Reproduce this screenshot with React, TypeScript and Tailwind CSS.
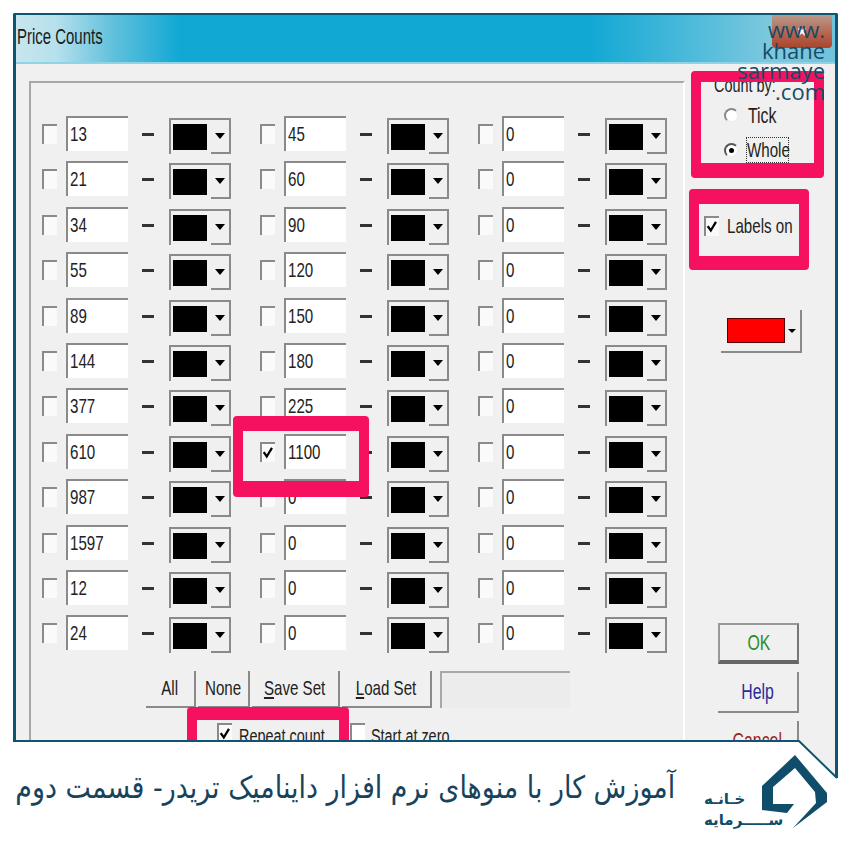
const F = "font-['Liberation_Sans',sans-serif] whitespace-nowrap";

const c1 = ["13","21","34","55","89","144","377","610","987","1597","12","24"];
const c2 = ["45","60","90","120","150","180","225","1100","0","0","0","0"];
const c3 = Array(12).fill("0");

function L({ children }: { children: React.ReactNode }) {
  return <span className="inline-block origin-left scale-x-[0.72]">{children}</span>;
}
function C({ children }: { children: React.ReactNode }) {
  return <span className="inline-block origin-center scale-x-[0.72]">{children}</span>;
}

function Check({ on, className = "" }: { on?: boolean; className?: string }) {
  return (
    <div className={`relative w-[15px] h-[20px] border-t-2 border-l-2 border-[#8a8a8a] bg-[#fafafa] shrink-0 ${className}`}>
      {on && (
        <svg viewBox="0 0 15 20" className="absolute left-0 top-0 w-[13px] h-[18px]">
          <path d="M2 9 L5.5 14 L11.5 4" fill="none" stroke="#000" strokeWidth="2.6" />
        </svg>
      )}
    </div>
  );
}

function Combo() {
  return (
    <div className="relative w-[62px] h-[36px] mt-[2px] ml-[15px] border-t-2 border-l-2 border-[#8a8a8a] bg-[#f0f0f0] shrink-0 flex pl-[2px] pt-[4px]">
      <div className="w-[34px] h-[26px] bg-black" />
      <div className="absolute right-0 top-0 bottom-0 w-[20px] border-r-2 border-b-2 border-[#8a8a8a] flex items-center justify-center">
        <div className="w-0 h-0 border-l-[5px] border-r-[5px] border-t-[6px] border-l-transparent border-r-transparent border-t-black" />
      </div>
    </div>
  );
}

function Cell({ v, on }: { v: string; on?: boolean }) {
  return (
    <div className="flex items-start h-[45.4px]">
      <Check on={on} className="mt-[8px]" />
      <div className={`ml-[9px] w-[62px] h-[35px] border-t-2 border-l-2 border-[#8a8a8a] bg-white pl-[2px] text-[21px] leading-[31px] text-[#222] ${F}`}><L>{v}</L></div>
      <div className="ml-[14px] mt-[17px] w-[12px] h-[3px] bg-[#333] shrink-0" />
      <Combo />
    </div>
  );
}

function Column({ values, on }: { values: string[]; on?: number }) {
  return (
    <div className="w-[218px] flex flex-col shrink-0">
      {values.map((v, i) => (
        <Cell key={i} v={v} on={on === i} />
      ))}
    </div>
  );
}

function Btn({ w, children }: { w: string; children: React.ReactNode }) {
  return (
    <div className={`${w} h-[37px] mr-[2px] border-r-2 border-b-2 border-[#8a8a8a] flex items-center justify-center text-[21px] text-[#222] ${F}`}><C>{children}</C></div>
  );
}

function SideBtn({ label, color, strong }: { label: string; color: string; strong?: boolean }) {
  return (
    <div className={`w-[81px] h-[41px] mb-[8px] flex items-center justify-center text-[22px] ${F} ${color} ${strong ? "border-2 border-t-[#999] border-l-[#999] border-r-[#777] border-b-[#666] border-b-4" : "border-r-2 border-b-2 border-[#8a8a8a]"}`}><C>{label}</C></div>
  );
}

function Highlight({ className }: { className: string }) {
  return <div className={`absolute border-[#f5115f] rounded-[4px] ${className}`} />;
}

export default function App() {
  return (
    <div className="relative w-[850px] h-[850px] bg-white overflow-hidden">
      <div className="pt-[13px] pl-[13px]">
        <div className="w-[825px] h-[766px] border-t-2 border-x-[3px] border-[#0f5470] bg-[#f0f0f0] rounded-t-[2px] overflow-hidden flex flex-col">
          <div className="relative h-[49px] shrink-0 border-b-2 border-[#8fd3e6] bg-[linear-gradient(90deg,#c8e6ee_0%,#b5e0ec_5%,#5fc0dc_12%,#11a8d4_20%,#11a8d4_70%,#7cc8de_92%,#6fc3da_100%)]">
            <div className={`pl-[1px] pt-[8px] text-[22px] leading-[28px] text-[#1a1a1a] ${F}`}><span className="inline-block origin-left scale-x-[0.68]">Price Counts</span></div>
            <div className="absolute right-[3px] top-0 w-[60px] h-[33px] rounded-b-[4px] bg-[linear-gradient(180deg,#b89a8c_0%,#b5614b_60%,#a8452e_100%)] flex items-center justify-center text-white text-[18px] font-bold">×</div>
          </div>
          <div className="flex flex-1 pt-[17px] pl-[13px]">
            <div className="w-[656px] shrink-0 border-t-2 border-l-2 border-[#a8a8a8] border-r-2 border-r-white pt-[33px] pl-[11px]">
              <div className="flex">
                <Column values={c1} />
                <Column values={c2} on={7} />
                <Column values={c3} />
              </div>
              <div className="flex pl-[104px] pt-[10px]">
                <Btn w="w-[50px]">All</Btn>
                <Btn w="w-[52px]">None</Btn>
                <Btn w="w-[88px]"><span><u>S</u>ave Set</span></Btn>
                <Btn w="w-[90px]"><span><u>L</u>oad Set</span></Btn>
                <div className="ml-[6px] w-[130px] h-[37px] border-t-2 border-l-2 border-[#a8a8a8] bg-[#ececec]" />
              </div>
              <div className="flex pl-[175px] pt-[15px] items-start">
                <Check on />
                <span className={`ml-[7px] w-[85px] pt-[2px] text-[20px] leading-[22px] text-[#222] ${F}`}><L>Repeat count</L></span>
                <Check className="ml-[26px] bg-white" />
                <span className={`ml-[6px] pt-[2px] text-[20px] leading-[22px] text-[#222] ${F}`}><L>Start at zero</L></span>
              </div>
            </div>
            <div className="flex-1 flex flex-col pl-[17px]">
              <div className={`pl-[12px] -mt-[6px] text-[20px] leading-[20px] text-[#222] ${F}`}><L>Count by:</L></div>
              <div className="flex items-center pl-[22px] mt-[3px] h-[34px]">
                <div className="w-[15px] h-[15px] rounded-full border-2 border-[#888] border-r-[#eee] border-b-[#eee] bg-white shrink-0" />
                <span className={`ml-[9px] text-[22px] text-[#222] ${F}`}><L>Tick</L></span>
              </div>
              <div className="flex items-center pl-[22px] h-[36px]">
                <div className="w-[15px] h-[15px] rounded-full border-2 border-[#555] border-r-[#eee] border-b-[#eee] bg-white flex items-center justify-center shrink-0">
                  <div className="w-[5px] h-[5px] rounded-full bg-black" />
                </div>
                <span className={`ml-[7px] w-[43px] border border-dotted border-[#333] text-[21px] leading-[24px] text-[#222] ${F}`}><L>Whole</L></span>
              </div>
              <div className="flex items-center h-[28px] mt-[44px]">
                <Check on className="ml-[2px]" />
                <span className={`ml-[8px] text-[21px] text-[#222] ${F}`}><L>Labels on</L></span>
              </div>
              <div className="relative ml-[19px] mt-[70px] w-[81px] h-[43px] border-r-2 border-b-2 border-[#8a8a8a] pl-[6px] pt-[8px]">
                <div className="w-[58px] h-[25px] bg-[#ff0000] border border-[#5a0000]" />
                <div className="absolute right-[4px] top-[19px] w-0 h-0 border-l-[4px] border-r-[4px] border-t-[4px] border-l-transparent border-r-transparent border-t-black" />
              </div>
              <div className="ml-[16px] mt-[270px]">
                <SideBtn label="OK" color="text-[#2e8b2e]" strong />
                <SideBtn label="Help" color="text-[#2a2a9a]" />
                <SideBtn label="Cancel" color="text-[#a02020]" />
              </div>
            </div>
          </div>
        </div>
      </div>

      <Highlight className="left-[691px] top-[71px] w-[133px] h-[107px] border-x-[10px] border-t-[11px] border-b-[15px]" />
      <Highlight className="left-[689px] top-[189px] w-[120px] h-[81px] border-x-[10px] border-t-[15px] border-b-[14px]" />
      <Highlight className="left-[233px] top-[416px] w-[136px] h-[81px] border-x-[10px] border-t-[15px] border-b-[16px]" />
      <Highlight className="left-[187px] top-[707px] w-[162px] h-[60px] border-x-[10px] border-t-[13px] border-b-[14px]" />

      <div className="absolute right-[25px] top-[19px] text-right text-[22px] leading-[20.5px] text-[#174a66] font-['Open_Sans',sans-serif]">
        <div>www.</div>
        <div>khane</div>
        <div>sarmaye</div>
        <div>.com</div>
      </div>

      <div className="absolute left-0 bottom-0 w-[850px] h-[110px]">
        <svg viewBox="0 0 850 110" className="absolute inset-0 w-[850px] h-[110px]">
          <polygon points="0,1 799,1 837,38 850,38 850,110 0,110" fill="#ffffff" />
          <polyline points="13,1 799,1 837,38" fill="none" stroke="#0f5470" strokeWidth="2" />
        </svg>
        <div className="relative flex items-start">
          <div dir="rtl" className="ml-[15px] mt-[22px] w-[660px] whitespace-nowrap text-right text-[31px] leading-[50px] text-[#17445c] font-['DejaVu_Sans',sans-serif]">
            <span className="inline-block origin-right scale-x-[0.868]">آموزش کار با منوهای نرم افزار داینامیک تریدر- قسمت دوم</span>
          </div>
          <div className="relative ml-[20px] mt-[5px] w-[145px] h-[95px]">
            <svg viewBox="0 0 145 95" className="absolute left-0 top-0 w-[145px] h-[95px]">
              <path fill="#0f4d6a" d="M100 10 L132 48 L132 57 L98 83 L121 58 L120 47 L100 23 L78 42 L78 59 L99 59 L92 68 L67 65 L67 41 Z" />
            </svg>
            <div className="absolute left-[9px] top-[44px] flex flex-col items-start text-[#0f4d6a] text-[15px] font-bold leading-[21px] whitespace-nowrap font-['DejaVu_Sans',sans-serif]">
              <div dir="rtl">خـانـه</div>
              <div dir="rtl">ســـــرمایه</div>
            </div>
          </div>
        </div>
      </div>
    </div>
  );
}
